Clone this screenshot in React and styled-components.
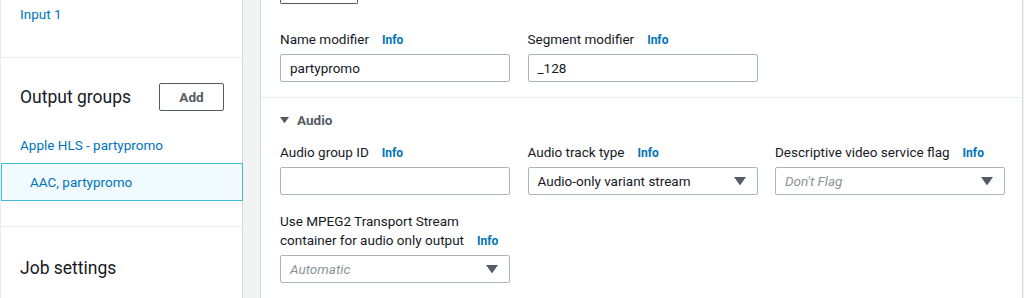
import React from 'react';
import styled, { createGlobalStyle } from 'styled-components';

// Page-wide reset and font
const GlobalStyle = createGlobalStyle`
    html, body {
        margin: 0;
        padding: 0;
        background: #f2f3f3;
        font-family: Roboto, "Liberation Sans", Arial, sans-serif;
        color: #16191f;
    }
`

// Small triangle used for the expander and the select boxes
function Caret({size = 10}) {
    return (
        <svg width={size} height={size * 0.7} viewBox="0 0 10 7">
            <path d="M0 0 L10 0 L5 7 Z" fill="#545b64" />
        </svg>
    )
}

// A form field with label, info link and either input or select
function Field({label, value, placeholder, select}) {
    return (
        <FieldWrap>
            <Label>
                {label}
                <InfoLink>Info</InfoLink>
            </Label>
            <Box>
                <BoxText placeholder={placeholder}>{value || placeholder}</BoxText>
                {select && <Caret size={12} />}
            </Box>
        </FieldWrap>
    )
}

function App() {
    return (
        <>
            <GlobalStyle />
            <Page>
                <Sidebar>
                    <SideSection height={58}>
                        <NavLink>Input 1</NavLink>
                    </SideSection>

                    <SideSection height={169}>
                        <GroupHeader>
                            <SideTitle>Output groups</SideTitle>
                            <AddButton>Add</AddButton>
                        </GroupHeader>
                        <NavLink>Apple HLS - partypromo</NavLink>
                        <SelectedItem>AAC, partypromo</SelectedItem>
                    </SideSection>

                    <SideSection last>
                        <JobTitle>Job settings</JobTitle>
                    </SideSection>
                </Sidebar>

                <Main>
                    <ButtonStub />
                    <FieldRow bottomPad={15}>
                        <Field label="Name modifier" value="partypromo" />
                        <Field label="Segment modifier" value="_128" />
                    </FieldRow>

                    <Divider />

                    <SectionHead>
                        <Caret size={9} />
                        <span>Audio</span>
                    </SectionHead>

                    <FieldRow>
                        <Field label="Audio group ID" />
                        <Field label="Audio track type" value="Audio-only variant stream" select />
                        <Field label="Descriptive video service flag" placeholder="Don't Flag" select />
                    </FieldRow>

                    <FieldRow topPad={17}>
                        <Field
                            label={<>Use MPEG2 Transport Stream<br />container for audio only output</>}
                            placeholder="Automatic"
                            select
                        />
                    </FieldRow>
                </Main>
            </Page>
        </>
    )
}

export default App;

// Outer page: sidebar + main panel side by side
const Page = styled.div`
    display: flex;
    gap: 17px;
    height: 298px;
    overflow: hidden;
`

// Left navigation panel
const Sidebar = styled.nav`
    width: 243px;
    flex-shrink: 0;
    background: #fff;
    border-left: 1px solid #eaeded;
    border-right: 1px solid #d5dbdb;
    box-sizing: border-box;
    display: flex;
    flex-direction: column;
`

const SideSection = styled.div`
    height: ${props => props.height ? `${props.height}px` : 'auto'};
    flex: ${props => props.last ? 1 : 'none'};
    border-bottom: ${props => props.last ? 'none' : '1px solid #eaeded'};
    box-sizing: border-box;
`

const NavLink = styled.div`
    color: #0073bb;
    font-size: 13.5px;
    line-height: 20px;
    padding: 4px 0 0 19px;
`

const GroupHeader = styled.div`
    display: flex;
    align-items: center;
    justify-content: space-between;
    padding: 25px 18px 0 19px;
    margin-bottom: 20px;
`

const SideTitle = styled.div`
    font-size: 17.5px;
    line-height: 24px;
    color: #16191f;
`

const AddButton = styled.button`
    width: 65px;
    height: 28px;
    background: #fff;
    border: 1px solid #545b64;
    border-radius: 2px;
    color: #545b64;
    font-family: inherit;
    font-weight: 700;
    font-size: 13.5px;
    padding: 0;
`

const SelectedItem = styled.div`
    margin: 8px -1px 0 0;
    height: 38px;
    box-sizing: border-box;
    border: 1px solid #44b9d6;
    background: #f1faff;
    color: #0073bb;
    font-size: 13.5px;
    display: flex;
    align-items: center;
    padding-left: 28px;
`

const JobTitle = styled.div`
    font-size: 17.5px;
    line-height: 24px;
    padding: 29px 0 0 19px;
`

// Right settings panel
const Main = styled.main`
    width: 763px;
    flex-shrink: 0;
    background: #fff;
    border-left: 1px solid #d5dbdb;
    border-right: 1px solid #d5dbdb;
    box-sizing: border-box;
    display: flex;
    flex-direction: column;
`

// Bottom edge of a button scrolled off the top
const ButtonStub = styled.div`
    width: 78px;
    height: 4px;
    margin-left: 19px;
    border: 1px solid #545b64;
    border-top: none;
    border-radius: 0 0 2px 2px;
    box-sizing: border-box;
    margin-bottom: 26px;
`

const FieldRow = styled.div`
    display: grid;
    grid-template-columns: repeat(3, 230px);
    column-gap: 17.5px;
    padding: ${props => props.topPad || 0}px 0 ${props => props.bottomPad || 0}px 19px;
`

const Divider = styled.div`
    height: 1px;
    background: #eaeded;
`

const SectionHead = styled.div`
    display: flex;
    align-items: center;
    gap: 8px;
    padding: 12px 0 0 19px;
    margin-bottom: 13px;
    font-size: 13.5px;
    line-height: 20px;
    font-weight: 700;
    color: #545b64;
`

const FieldWrap = styled.div`
    display: flex;
    flex-direction: column;
`

const Label = styled.label`
    font-size: 13.5px;
    line-height: 19px;
    color: #16191f;
    margin-bottom: 4px;
`

const InfoLink = styled.span`
    color: #0073bb;
    font-size: 12px;
    font-weight: 700;
    margin-left: 13px;
`

const Box = styled.div`
    height: 28px;
    box-sizing: border-box;
    border: 1px solid #aab7b8;
    border-radius: 2px;
    background: #fff;
    display: flex;
    align-items: center;
    justify-content: space-between;
    padding: 0 11px 0 9px;
`

const BoxText = styled.span`
    font-size: 13.5px;
    color: ${props => props.placeholder ? '#879596' : '#16191f'};
    font-style: ${props => props.placeholder ? 'italic' : 'normal'};
`
